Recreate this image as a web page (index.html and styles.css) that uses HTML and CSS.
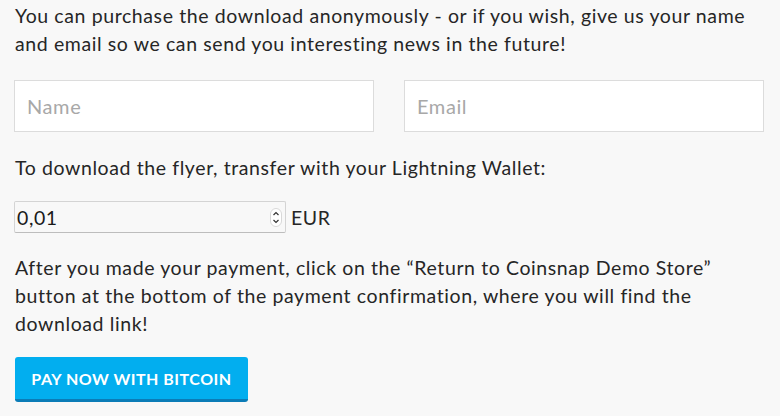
FILE: index.html
```html
<!DOCTYPE html>
<html>
<head>
<meta charset="utf-8">
<link rel="stylesheet" href="styles.css">
</head>
<body>
<div class="page">
  <p class="text intro">You can purchase the download anonymously - or if you wish, give us your name and email so we can send you interesting news in the future!</p>
  <div class="fields">
    <div class="field"><span class="placeholder">Name</span></div>
    <div class="field"><span class="placeholder">Email</span></div>
  </div>
  <p class="text label">To download the flyer, transfer with your Lightning Wallet:</p>
  <div class="amount-row">
    <div class="amount">
      <span class="amount-value">0,01</span>
      <svg class="spin" width="12" height="19" viewBox="0 0 12 19">
        <rect x="0.5" y="0.5" width="11" height="18" rx="5.5" fill="#fff" stroke="#d8d8d8"/>
        <path d="M3.5 7 L6 4.5 L8.5 7" fill="none" stroke="#333" stroke-width="1.2"/>
        <path d="M3.5 12 L6 14.5 L8.5 12" fill="none" stroke="#333" stroke-width="1.2"/>
      </svg>
    </div>
    <span class="currency">EUR</span>
  </div>
  <p class="text after">After you made your payment, click on the “Return to Coinsnap Demo Store” button at the bottom of the payment confirmation, where you will find the download link!</p>
  <button class="pay">PAY NOW WITH BITCOIN</button>
</div>
</body>
</html>
```

FILE: styles.css
```css
html, body {
  margin: 0;
  padding: 0;
  background: #f8f8f8;
}
body {
  font-family: Lato, "Liberation Sans", sans-serif;
  color: #262626;
  letter-spacing: 0.6px;
}
.page {
  width: 750px;
  padding: 2px 0 0 14px;
}
.text {
  margin: 0;
  font-size: 19.5px;
  line-height: 28px;
  padding-left: 1px;
}
.fields {
  display: flex;
  gap: 30px;
  margin-top: 22px;
}
.field {
  flex: 1;
  box-sizing: border-box;
  height: 52px;
  background: #fff;
  border: 1px solid #dcdcdc;
  display: flex;
  align-items: center;
  padding-left: 12px;
}
.placeholder {
  color: #a8a8a8;
  font-size: 20px;
}
.label {
  margin-top: 22px;
}
.amount-row {
  display: flex;
  align-items: center;
  gap: 5px;
  margin-top: 19px;
}
.amount {
  box-sizing: border-box;
  width: 272px;
  height: 32px;
  border: 1px solid #d4d4d4;
  border-bottom-color: #bdbdbd;
  border-radius: 2px;
  display: flex;
  align-items: center;
  justify-content: space-between;
  padding: 0 3px 0 2px;
  background: #f8f8f8;
}
.amount-value {
  font-size: 19.5px;
  color: #1a1a1a;
}
.spin {
  display: block;
}
.currency {
  font-size: 19.5px;
}
.after {
  margin-top: 21px;
}
.pay {
  display: block;
  margin-top: 19px;
  margin-left: 1px;
  width: 233px;
  height: 45px;
  background: #02aeef;
  border: none;
  border-bottom: 3px solid #0b7cb7;
  border-radius: 3px;
  color: #fff;
  font-family: Lato, "Liberation Sans", sans-serif;
  font-weight: 700;
  font-size: 16px;
  letter-spacing: 0.5px;
  padding: 0;
}
```
